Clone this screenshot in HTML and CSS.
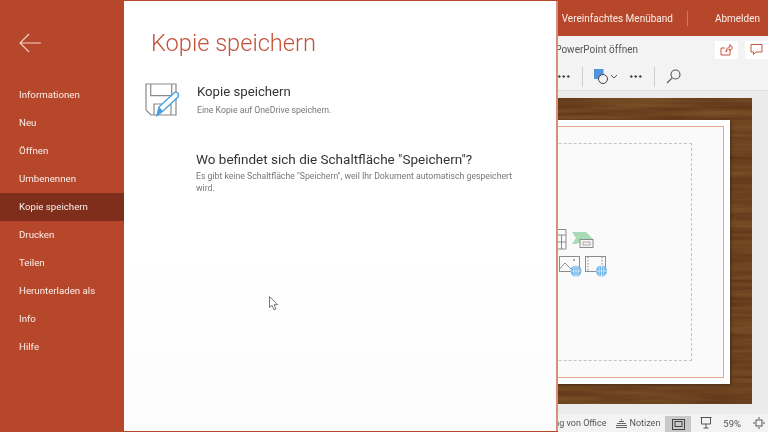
FILE: index.html
```html
<!DOCTYPE html>
<html lang="de">
<head>
  <meta charset="UTF-8" />
  <title>Kopie speichern</title>
  <link rel="stylesheet" href="styles.css">
</head>
<body>
  <div class="screen">
    <nav class="sidebar">
      <div class="back">
        <svg width="22" height="20" viewBox="0 0 22 20" fill="none" stroke="#f0d5cc" stroke-width="1.1"><path d="M22 10H1M10 1l-9 9 9 9"/></svg>
      </div>
      <ul class="menu">
        <li>Informationen</li>
        <li>Neu</li>
        <li>Öffnen</li>
        <li>Umbenennen</li>
        <li class="active">Kopie speichern</li>
        <li>Drucken</li>
        <li>Teilen</li>
        <li>Herunterladen als</li>
        <li>Info</li>
        <li>Hilfe</li>
      </ul>
    </nav>

    <main class="panel">
      <h1>Kopie speichern</h1>
      <section class="option">
        <svg class="option-icon" width="36" height="36" viewBox="0 0 36 36" fill="none">
          <path d="M1 1H31V32H6L1 27Z" stroke="#8a8a8a" stroke-width="1.2" fill="#fff"/>
          <path d="M5.700 1V12.700H26.700V1" stroke="#8a8a8a" stroke-width="1.2"/>
          <path d="M9 32V21H26V32" stroke="#8a8a8a" stroke-width="1.2"/>
          <path d="M14 24L29 10C31 8 35 10 33 14L18 28L12 32.500Z" fill="#fff" stroke="#4a9fe0" stroke-width="1.4"/>
          <path d="M14 24L18 28L11.500 33Z" fill="#4a9fe0"/>
        </svg>
        <div class="option-text">
          <h2>Kopie speichern</h2>
          <p>Eine Kopie auf OneDrive speichern.</p>
        </div>
      </section>
      <section class="help">
        <h2>Wo befindet sich die Schaltfläche "Speichern"?</h2>
        <p>Es gibt keine Schaltfläche "Speichern", weil Ihr Dokument automatisch gespeichert wird.</p>
      </section>
    </main>

    <div class="app">
      <header class="titlebar">
        <span>Vereinfachtes Menüband</span>
        <i class="title-sep"></i>
        <span>Abmelden</span>
      </header>

      <div class="ribbon">
        <div class="ribbon-top">
          <span class="open-link">In PowerPoint öffnen</span>
          <button class="mini-btn">
            <svg width="13" height="13" viewBox="0 0 13 13" fill="none" stroke="#c8553a"><path d="M1 5V12H10V8M1 5H5M6 9C6 5.500 8 4 10 4V1.500L12.500 5 10 8V6C8 6 7 7 6 9Z"/></svg>
          </button>
          <button class="mini-btn">
            <svg width="13" height="13" viewBox="0 0 13 13" fill="none" stroke="#c8553a"><path d="M1 1.500H12V9H6L3.500 11.500V9H1Z"/></svg>
          </button>
        </div>
        <div class="ribbon-tools">
          <i class="dots first"></i>
          <i class="tool-sep"></i>
          <svg class="shapes" width="24" height="16" viewBox="0 0 24 16" fill="none">
            <rect x="0" y="0" width="9.500" height="10" fill="#4f95d9"/>
            <circle cx="9" cy="10" r="4.500" fill="#f3f3f3" stroke="#444"/>
            <path d="M17 6l3 3 3-3" stroke="#555"/>
          </svg>
          <i class="dots"></i>
          <i class="tool-sep"></i>
          <svg width="15" height="15" viewBox="0 0 15 15" fill="none" stroke="#555" stroke-width="1.100"><circle cx="9.500" cy="5.500" r="4.500"/><path d="M6.200 8.800L1 14"/></svg>
        </div>
      </div>

      <div class="canvas">
        <svg class="grain-defs" width="0" height="0">
          <filter id="grain" x="0" y="0" width="100%" height="100%">
            <feTurbulence type="fractalNoise" baseFrequency="0.012 0.22" numOctaves="3" seed="4"/>
            <feColorMatrix values="0 0 0 0 0.24  0 0 0 0 0.11  0 0 0 0 0.03  0.9 0 0 0 -0.1"/>
          </filter>
        </svg>
        <div class="wood">
          <svg class="wood-grain" width="100%" height="100%"><rect width="100%" height="100%" filter="url(#grain)"/></svg>
          <div class="slide">
            <div class="slide-line">
              <div class="placeholder">
                <div class="content-icons">
                  <svg width="44" height="21" viewBox="0 0 44 21" fill="none">
                    <path d="M0 .5H9V20H0M0 6H9M0 13H9M4.500 6V20" stroke="#8c8c8c"/>
                    <path d="M15 3H29L36 10H30V14H20V15H15L19 9Z" fill="#a9dcb6"/>
                    <rect x="23" y="10.500" width="13" height="8" fill="#f5f5f5" stroke="#8c8c8c"/>
                    <rect x="26" y="13" width="7" height="3" stroke="#aaa"/>
                  </svg>
                  <svg width="52" height="21" viewBox="0 0 52 21" fill="none">
                    <rect x="2.500" y=".5" width="20" height="15" fill="#fafafa" stroke="#8c8c8c"/>
                    <path d="M2.500 13L8 7L15 14" stroke="#8c8c8c"/>
                    <circle cx="17" cy="4" r="1" fill="#8c8c8c"/>
                    <rect x="28.500" y=".5" width="20" height="15" fill="#fafafa" stroke="#8c8c8c"/>
                    <path d="M31 1V15M45 1V15" stroke="#8c8c8c" stroke-dasharray="1.500 1.500"/>
                    <circle cx="19" cy="15" r="5.500" fill="#6db4ea"/>
                    <circle cx="44.500" cy="15" r="5.500" fill="#6db4ea"/>
                    <path d="M13.500 15H24.500M19 9.500V20.500M39 15H50M44.500 9.500V20.500" stroke="#e8f4fc" stroke-width=".7"/>
                    <ellipse cx="19" cy="15" rx="2.500" ry="5.500" stroke="#e8f4fc" stroke-width=".7"/>
                    <ellipse cx="44.500" cy="15" rx="2.500" ry="5.500" stroke="#e8f4fc" stroke-width=".7"/>
                  </svg>
                </div>
              </div>
            </div>
          </div>
        </div>
      </div>

      <footer class="statusbar">
        <span class="status-text">Hilfe zur Verbesserung von Office</span>
        <span class="notes">
          <svg width="11" height="9" viewBox="0 0 11 9" fill="none" stroke="#666"><path d="M0 8.500H11M0 6.500H11M1 4.500H10M3 2.500H8M5.500 0V1.500"/></svg>
          Notizen
        </span>
        <span class="view-btn">
          <svg width="13" height="11" viewBox="0 0 13 11" fill="none" stroke="#444"><rect x=".5" y=".5" width="12" height="10"/><rect x="3" y="2.500" width="7" height="5"/></svg>
        </span>
        <svg class="present" width="12" height="12" viewBox="0 0 12 12" fill="none" stroke="#555"><path d="M.5 .5H11.500M1.500 .5V7H10.500V.5M6 7V11M3.500 11H8.500"/></svg>
        <span class="zoom-pct">59%</span>
        <svg class="fit" width="12" height="12" viewBox="0 0 12 12" fill="none" stroke="#555"><rect x="3" y="3" width="6" height="6"/><path d="M6 0V2M6 10V12M0 6H2M10 6H12"/></svg>
      </footer>
    </div>

    <svg class="cursor" width="11" height="15" viewBox="0 0 11 15"><path d="M.5 .5V11.500L3 9.300L5 13.800L7 13L5.100 8.700H8.500Z" fill="#fff" stroke="#666" stroke-width=".9"/></svg>
  </div>
</body>
</html>
```

FILE: styles.css
```css
* {
  box-sizing: border-box;
}
html, body {
  margin: 0;
  height: 100%;
  overflow: hidden;
}
body {
  font-family: Roboto, 'Open Sans', sans-serif;
  color: #333;
}
.screen {
  position: relative;
  display: flex;
  width: 768px;
  height: 432px;
  background-color: #b7472a;
  filter: blur(0.4px);
}

/* left menu */
.sidebar {
  width: 124px;
  flex: none;
  color: #fbeee9;
}
.back {
  height: 80.6px;
  padding: 33px 0 0 19px;
}
.menu {
  list-style: none;
  margin: 0;
  padding: 0;
}
.menu li {
  height: 28.1px;
  padding-left: 19px;
  font-size: 9.7px;
  line-height: 28.4px;
}
.menu li.active {
  background-color: #7f2e1b;
}

/* backstage panel */
.panel {
  width: 434px;
  flex: none;
  margin: 1px 0;
  padding: 23px 27px 0 21px;
  background: linear-gradient(#fff 60%, #fcfcfc);
  border-right: 2px solid #d98d7b;
  z-index: 1;
}
.panel h1 {
  margin: 0 0 21px 6px;
  font-size: 23.6px;
  font-weight: 300;
  line-height: 38px;
  color: #c4533a;
}
.panel h2 {
  margin: 0;
  font-weight: 400;
  color: #333;
}
.panel p {
  margin: 0;
  max-width: 330px;
  font-size: 8.7px;
  line-height: 12px;
  color: #777;
}
.option {
  display: flex;
  gap: 16px;
}
.option-icon {
  flex: none;
}
.option-text {
  margin-top: -1px;
}
.option h2 {
  font-size: 13.2px;
  line-height: 20px;
}
.option p {
  margin-top: 2px;
}
.help {
  margin: 30px 0 0 51px;
}
.help h2 {
  font-size: 13.5px;
  line-height: 20px;
  margin-bottom: 1px;
}

/* powerpoint behind the panel */
.app {
  width: 210px;
  flex: none;
  display: flex;
  flex-direction: column;
  overflow: hidden;
  background-color: #ebebeb;
}
.titlebar {
  height: 36px;
  flex: none;
  display: flex;
  align-items: center;
  justify-content: flex-end;
  padding-right: 8px;
  background-color: #b7472a;
  font-size: 10px;
  color: #fbeee9;
  white-space: nowrap;
}
.titlebar > * {
  flex: none;
}
.title-sep {
  width: 1px;
  height: 15px;
  margin: 0 27px 0 14px;
  background-color: #cb7a64;
}
.ribbon {
  height: 55px;
  flex: none;
  background-color: #f3f3f3;
  border-bottom: 1px solid #e0e0e0;
}
.ribbon-top {
  height: 27px;
  display: flex;
  align-items: center;
  justify-content: flex-end;
  gap: 7px;
}
.ribbon-top > * {
  flex: none;
}
.open-link {
  margin-right: 70px;
  font-size: 10px;
  color: #555;
  white-space: nowrap;
}
.mini-btn {
  width: 23px;
  height: 18px;
  padding: 0;
  border: 0;
  background-color: #fff;
  display: flex;
  align-items: center;
  justify-content: center;
}
.ribbon-tools {
  height: 27px;
  display: flex;
  align-items: center;
}
.dots {
  width: 13px;
  height: 3px;
  background: radial-gradient(circle, #444 1px, transparent 1.4px) 0 0 / 4.5px 3px;
}
.dots.first {
  margin-left: -1px;
}
.tool-sep {
  width: 1px;
  height: 20px;
  margin: 0 11px 0 12px;
  background-color: #cfcfcf;
}
.shapes {
  margin-right: 11px;
}
.canvas {
  flex: 1;
  display: flex;
  justify-content: flex-end;
  padding: 7px 16px 10px 0;
}
.grain-defs {
  position: absolute;
}
.wood {
  position: relative;
  width: 400px;
  flex: none;
  padding: 22px 22px 20px 0;
  background-color: #5f3417;
  display: flex;
}
.wood-grain {
  position: absolute;
  inset: 0;
}
.slide {
  position: relative;
  flex: 1;
  padding: 6px 6px 6px 0;
  background-color: #fff;
  box-shadow: 1px 1px 3px rgba(0, 0, 0, 0.35);
  display: flex;
}
.slide-line {
  flex: 1;
  padding: 16px 31px 16px 0;
  background-color: #fafafa;
  border: 1px solid #e2a78f;
  display: flex;
}
.placeholder {
  flex: 1;
  border: 1px dashed #c4c4c4;
  display: flex;
  flex-direction: column;
  justify-content: center;
  align-items: flex-end;
  padding: 2px 82px 0 0;
}
.content-icons {
  display: flex;
  flex-direction: column;
  gap: 6px;
  align-items: flex-start;
}
.content-icons svg {
  display: block;
}
.statusbar {
  height: 18px;
  flex: none;
  display: flex;
  align-items: center;
  justify-content: flex-end;
  background-color: #f3f3f3;
  font-size: 9px;
  color: #555;
  white-space: nowrap;
}
.statusbar > * {
  flex: none;
}
.status-text {
  margin-right: 9px;
}
.notes {
  display: flex;
  align-items: center;
  gap: 3px;
  margin-right: 5px;
}
.view-btn {
  width: 26px;
  height: 16px;
  align-self: flex-end;
  background-color: #c9c9c9;
  display: flex;
  align-items: center;
  justify-content: center;
}
.present {
  margin: 0 11px 0 9px;
}
.zoom-pct {
  margin-right: 12px;
  font-size: 9.5px;
}
.fit {
  margin-right: 3px;
}

/* mouse pointer */
.cursor {
  position: absolute;
  left: 269px;
  top: 296px;
  z-index: 2;
}
```
